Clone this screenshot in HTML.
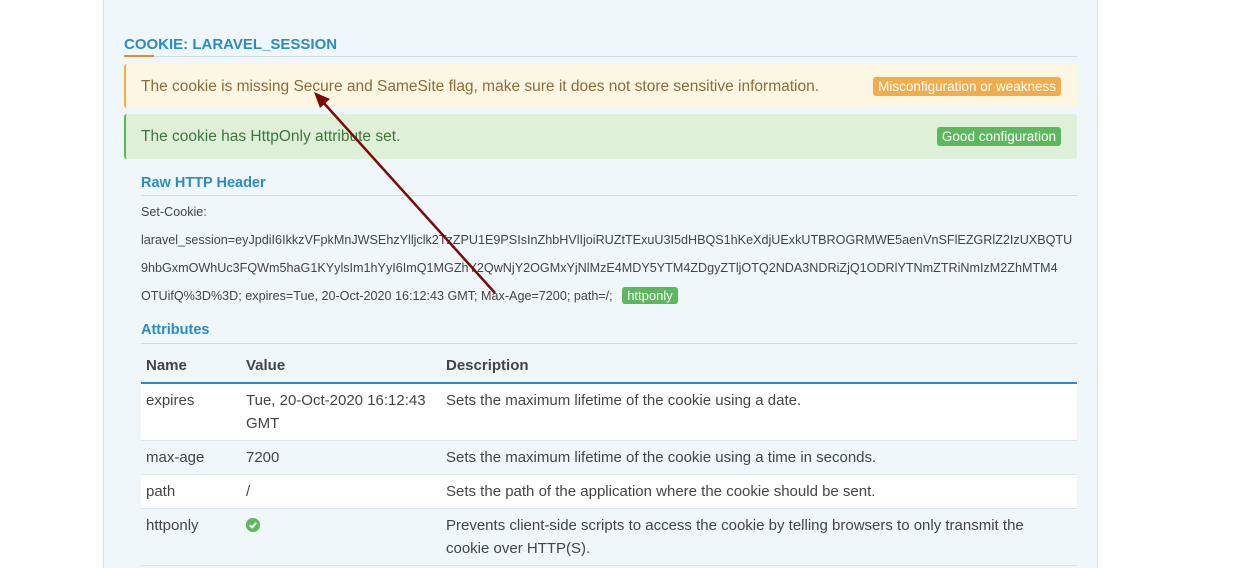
<!DOCTYPE html>
<html><head><meta charset="utf-8"><style>
*{margin:0;padding:0;box-sizing:border-box}
body{width:1244px;height:568px;background:#fff;font-family:"Liberation Sans","DejaVu Sans",sans-serif;position:relative;overflow:hidden;color:#555}
.panel{position:absolute;left:103px;top:0;width:995px;height:568px;background:#eff7fb;border-left:1px solid #d3e0e9;border-right:1px solid #d3e0e9}
.a{position:absolute}
.h{left:124px;top:35px;font-weight:bold;font-size:15px;color:#2a8cc4}
.hl{left:124px;top:56px;width:953px;height:1px;background:#cfdce6}
.ho{left:124px;top:55px;width:30px;height:2px;background:#f28a1a}
.al{left:124px;width:953px;border-radius:3px;font-size:15.5px;padding-left:15px;line-height:45px}
.y{top:64px;height:44px;background:#fdf6e3;border-left:2px solid #f0ad4e;color:#8a6d3b}
.g{top:114px;height:45px;background:#dff0d8;border-left:2px solid #5cb85c;color:#3c763d}
.b{position:absolute;right:16px;top:13px;line-height:19px;font-size:13.5px;color:#fff;padding:0 5px;border-radius:3px}
.s{left:141px;font-weight:bold;font-size:14.5px;color:#2a8cc4}
.sl{left:141px;width:936px;height:1px;background:#cfdce6}
.raw{left:141px;top:198px;width:960px;font-size:12.6px;line-height:28px;color:#444;white-space:nowrap}
.hb{background:#5cb85c;color:#fff;padding:1px 5px;border-radius:3px;font-size:13px;margin-left:6px}
table{position:absolute;left:141px;top:348px;width:936px;border-collapse:collapse;font-size:15px;color:#444}
th{text-align:left;font-weight:bold;height:35px;padding:0 5px;border-bottom:2px solid #2a8cc4;color:#444;font-size:15px}
td{padding:0 5px;vertical-align:top;line-height:23px;border-bottom:1px solid #dde4ea}
tr.w td{background:#fff}
</style></head><body>
<div class="panel"></div>
<div class="a h" style="top:36px">COOKIE: LARAVEL_SESSION</div>
<div class="a hl"></div><div class="a ho"></div>
<div class="a al y">The cookie is missing Secure and SameSite flag, make sure it does not store sensitive information.<span class="b" style="background:#f0ad4e">Misconfiguration or weakness</span></div>
<div class="a al g">The cookie has HttpOnly attribute set.<span class="b" style="background:#5cb85c">Good configuration</span></div>
<div class="a s" style="top:175px">Raw HTTP Header</div>
<div class="a sl" style="top:195px"></div>
<div class="a raw">Set-Cookie:<br>laravel_session=eyJpdiI6IkkzVFpkMnJWSEhzYlljclk2TzZPU1E9PSIsInZhbHVlIjoiRUZtTExuU3I5dHBQS1hKeXdjUExkUTBROGRMWE5aenVnSFlEZGRlZ2IzUXBQTU<br>9hbGxmOWhUc3FQWm5haG1KYylsIm1hYyI6ImQ1MGZhY2QwNjY2OGMxYjNlMzE4MDY5YTM4ZDgyZTljOTQ2NDA3NDRiZjQ1ODRlYTNmZTRiNmIzM2ZhMTM4<br>OTUifQ%3D%3D; expires=Tue, 20-Oct-2020 16:12:43 GMT; Max-Age=7200; path=/; <span class="hb">httponly</span></div>
<div class="a s" style="top:322px">Attributes</div>
<div class="a sl" style="top:343px"></div>
<table>
<tr><th style="width:100px">Name</th><th style="width:200px">Value</th><th style="padding-right:30px">Description</th></tr>
<tr class="w"><td style="padding:5px 5px 5px">expires</td><td style="padding:5px 5px 5px">Tue, 20-Oct-2020 16:12:43 GMT</td><td style="padding:5px 5px 5px">Sets the maximum lifetime of the cookie using a date.</td></tr>
<tr><td style="padding:5px">max-age</td><td style="padding:5px">7200</td><td style="padding:5px">Sets the maximum lifetime of the cookie using a time in seconds.</td></tr>
<tr class="w"><td style="padding:5px">path</td><td style="padding:5px">/</td><td style="padding:5px">Sets the path of the application where the cookie should be sent.</td></tr>
<tr><td style="padding:5px 5px 6px">httponly</td><td style="padding:5px"><svg width="14" height="14" viewBox="0 0 14 14" style="margin-top:4px"><circle cx="7" cy="7" r="7" fill="#5cb85c"/><path d="M3.8 7.2l2.2 2.2 4.2-4.4" stroke="#fff" stroke-width="2" fill="none"/></svg></td><td style="padding:5px 30px 5px 5px">Prevents client-side scripts to access the cookie by telling browsers to only transmit the cookie over HTTP(S).</td></tr>
</table>
<svg class="a" style="left:0;top:0" width="1244" height="568"><line x1="495" y1="293" x2="322" y2="101" stroke="#7a0a0a" stroke-width="2.5"/><path d="M314 92 L330 99 L320 108 Z" fill="#7a0a0a"/></svg>
</body></html>
